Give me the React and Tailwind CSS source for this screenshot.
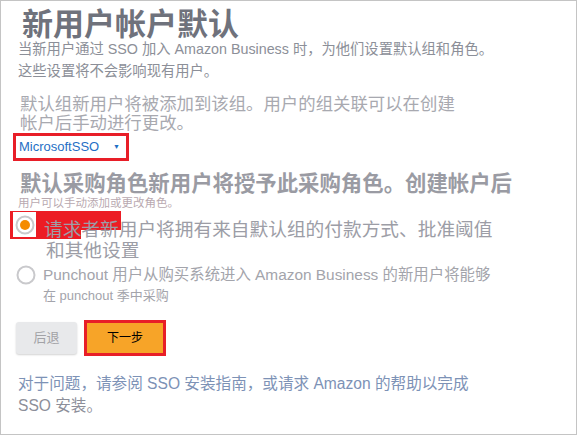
import React from 'react';

const font = { fontFamily: '"Liberation Sans", "Noto Sans CJK SC", sans-serif' };

function RadioDot({ checked }) {
  return (
    <svg width="20" height="20" viewBox="0 0 20 20">
      <circle cx="10" cy="10" r="8.5" fill="white" stroke="#c9c9cc" strokeWidth="2" />
      {checked && <circle cx="10" cy="10" r="5" fill="#f58b00" />}
    </svg>
  );
}

export default function App() {
  return (
    <div style={font} className="w-[577px] h-[435px] bg-white border border-[#c4c4c4] overflow-hidden">
      <div className="pl-[17px]">
        {/* Title */}
        <h1 className="ml-[4px] mt-[7px] text-[31px] leading-[34px] font-semibold text-[#6f727c] whitespace-nowrap">
          新用户帐户默认
        </h1>
        <div className="-mt-[4px] text-[14.3px] leading-[22px] text-[#8c8f98] whitespace-nowrap">
          <div>当新用户通过 SSO 加入 Amazon Business 时，为他们设置默认组和角色。</div>
          <div>这些设置将不会影响现有用户。</div>
        </div>

        {/* Default group */}
        <div className="ml-[2px] mt-[13px] text-[17.4px] leading-[19px] text-[#a8a9b0] whitespace-nowrap">
          <div>默认组新用户将被添加到该组。用户的组关联可以在创建</div>
          <div>帐户后手动进行更改。</div>
        </div>
        <div className="-ml-[5px] w-[116px] h-[28px] border-[3px] border-[#e81e28] flex items-center justify-between pl-[3px] pr-[6px]">
          <span className="text-[13px] text-[#1f6fc5]">MicrosoftSSO</span>
          <span className="text-[7px] text-[#1f6fc5]">▼</span>
        </div>

        {/* Default role */}
        <div className="ml-[2px] mt-[12px] text-[21.4px] leading-[23px] font-semibold text-[#9a9ba3] whitespace-nowrap">
          默认采购角色新用户将授予此采购角色。创建帐户后
        </div>
        <div className="mt-[1px] text-[11.5px] leading-[12px] text-[#b9a9b0] whitespace-nowrap">
          用户可以手动添加或更改角色。
        </div>

        {/* Option 1 */}
        <div className="relative mt-[2px]">
          <div className="absolute -left-[8px] top-0 w-[111px] h-[19px] bg-[#ec1c24]"></div>
          <div className="absolute -left-[8px] top-0 w-[71px] h-[28px] bg-[#ec1c24]"></div>
          <div className="absolute -left-[5px] top-[1px] w-[23px] h-[25px] bg-white flex items-center justify-center">
            <RadioDot checked />
          </div>
          <div className="relative ml-[26px] pt-[8px] text-[18.7px] leading-[21px] text-[#9c9da6] whitespace-nowrap">
            <div>请求者新用户将拥有来自默认组的付款方式、批准阈值</div>
            <div className="ml-[2px]">和其他设置</div>
          </div>
        </div>

        {/* Option 2 */}
        <div className="flex mt-[4px]">
          <div className="w-[25px] -ml-[2px] flex justify-start">
            <RadioDot />
          </div>
          <div className="ml-[2px] text-[#a3a4ab] whitespace-nowrap">
            <div className="text-[15.4px] leading-[20px]">Punchout 用户从购买系统进入 Amazon Business 的新用户将能够</div>
            <div className="mt-[2px] text-[13px] leading-[17px]">在 punchout 季中采购</div>
          </div>
        </div>

        {/* Buttons */}
        <div className="flex items-center gap-[7px] mt-[16px] -ml-[2px]">
          <button className="w-[61px] h-[32px] rounded-[3px] bg-[#e8e9eb] shadow-[0_1px_2px_rgba(0,0,0,0.18)] text-[13px] text-[#a2a2a6]">
            后退
          </button>
          <button className="w-[82px] h-[36px] border-[3px] border-[#e81e28] bg-[#f7a428] text-[12px] text-black">
            下一步
          </button>
        </div>

        {/* Help */}
        <div className="mt-[17px] text-[15.6px] leading-[22px] whitespace-nowrap">
          <div className="text-[#7d92b6]">对于问题，请参阅 SSO 安装指南，或请求 Amazon 的帮助以完成</div>
          <div className="text-[#8d8f9a]">SSO 安装。</div>
        </div>
      </div>
    </div>
  );
}
